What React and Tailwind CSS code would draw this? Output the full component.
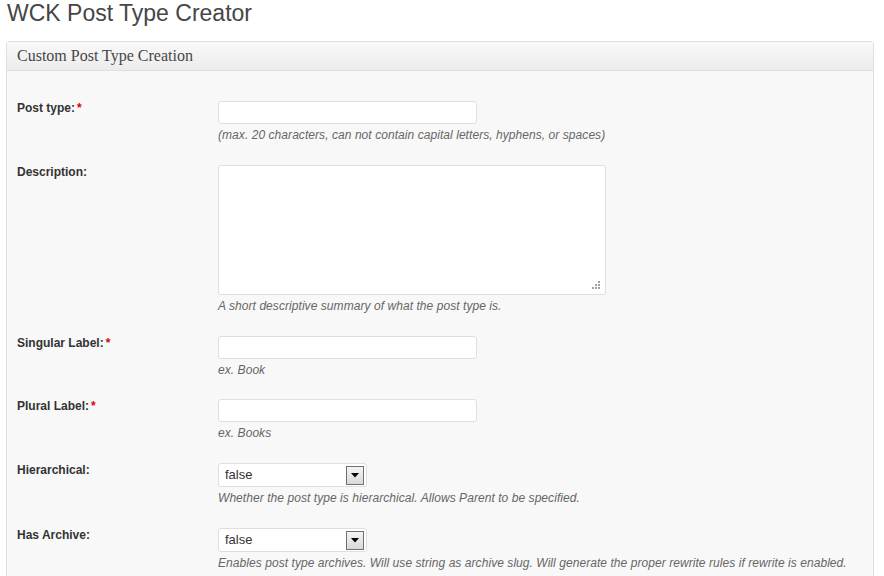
import React from "react";

const SANS = { fontFamily: '"Liberation Sans", Arial, sans-serif' };

function Grip() {
  return (
    <svg width="10" height="10" viewBox="0 0 10 10" className="absolute right-[4px] bottom-[4px]">
      {[
        [7, 1],
        [7, 4],
        [4, 4],
        [7, 7],
        [4, 7],
        [1, 7],
      ].map(([x, y], i) => (
        <rect key={i} x={x} y={y} width="2" height="2" fill="#a0a0a0" />
      ))}
    </svg>
  );
}

function SelectBox() {
  return (
    <div className="relative w-[149px] h-[24px] bg-white border border-[#dfdfdf] rounded-[3px] flex items-center">
      <span className="pl-[6px] text-[13px] text-[#333]">false</span>
      <div className="absolute right-[2px] top-[2px] w-[18px] h-[19px] border border-[#707070] bg-gradient-to-b from-[#f4f4f4] to-[#d9d9d9] flex items-center justify-center">
        <svg width="8" height="5" viewBox="0 0 8 5">
          <polygon points="0,0 8,0 4,4.5" fill="#000" />
        </svg>
      </div>
    </div>
  );
}

function Row({ label, required, children, desc, mb }) {
  return (
    <div className="flex" style={{ marginBottom: mb }}>
      <div className="w-[201px] shrink-0 pt-[1px] text-[12px] leading-[13px] font-bold text-[#333]">
        {label}
        {required && <span className="text-[#d00] ml-[2px]">*</span>}
      </div>
      <div className="flex flex-col">
        {children}
        <div className="mt-[3px] text-[12px] leading-[16px] italic text-[#666] tracking-[0.06px]">{desc}</div>
      </div>
    </div>
  );
}

export default function App() {
  return (
    <div className="bg-white min-h-[576px] pl-[6px] pr-[10px]" style={SANS}>
      <h2 className="text-[23px] leading-[26px] text-[#464646] pl-[1px] mb-[15px] font-normal">
        WCK Post Type Creator
      </h2>
      <div className="border border-[#dfdfdf] rounded-[3px] bg-[#f8f8f8] overflow-hidden">
        <div
          className="h-[29px] border-b border-[#dfdfdf] bg-gradient-to-b from-[#f9f9f9] to-[#ececec] flex items-center pl-[10px] text-[16px] text-[#464646]"
          style={{ fontFamily: '"Liberation Serif", Georgia, serif' }}
        >
          Custom Post Type Creation
        </div>
        <div className="pl-[10px] pt-[30px] pb-[40px]">
          <Row label="Post type:" required mb="22px" desc="(max. 20 characters, can not contain capital letters, hyphens, or spaces)">
            <div className="w-[259px] h-[23px] bg-white border border-[#dfdfdf] rounded-[3px]" />
          </Row>
          <Row label="Description:" mb="22px" desc="A short descriptive summary of what the post type is.">
            <div className="relative w-[388px] h-[130px] bg-white border border-[#dfdfdf] rounded-[3px]">
              <Grip />
            </div>
          </Row>
          <Row label="Singular Label:" required mb="21px" desc="ex. Book">
            <div className="w-[259px] h-[23px] bg-white border border-[#dfdfdf] rounded-[3px]" />
          </Row>
          <Row label="Plural Label:" required mb="22px" desc="ex. Books">
            <div className="w-[259px] h-[23px] bg-white border border-[#dfdfdf] rounded-[3px]" />
          </Row>
          <Row label="Hierarchical:" mb="22px" desc="Whether the post type is hierarchical. Allows Parent to be specified.">
            <SelectBox />
          </Row>
          <Row label="Has Archive:" mb="22px" desc="Enables post type archives. Will use string as archive slug. Will generate the proper rewrite rules if rewrite is enabled.">
            <SelectBox />
          </Row>
        </div>
      </div>
    </div>
  );
}
